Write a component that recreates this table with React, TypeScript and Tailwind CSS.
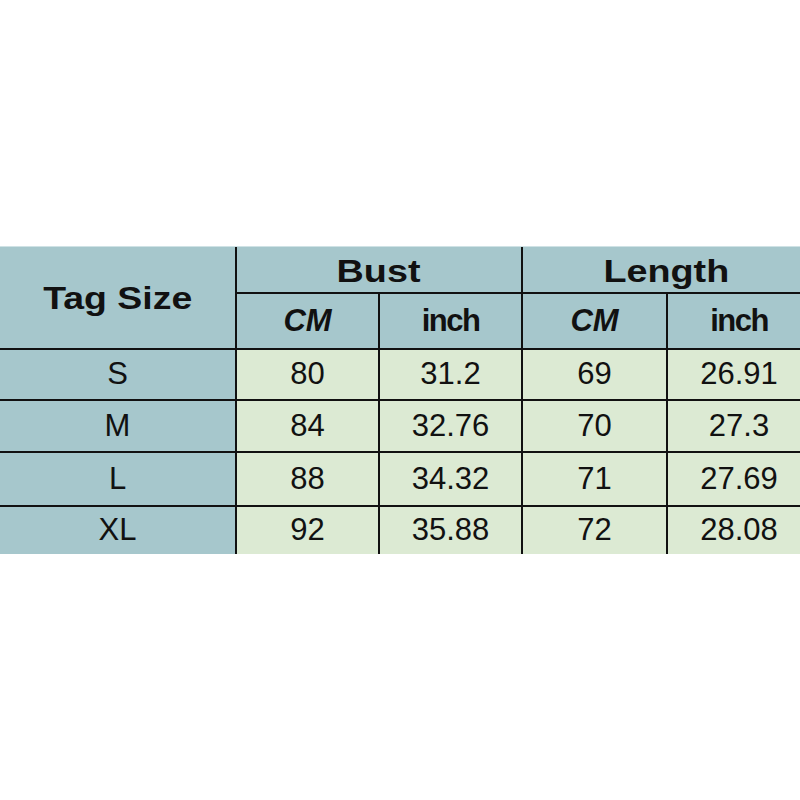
const blue = 'bg-[#a6c7cc]';
const green = 'bg-[#dcead3]';

const rows = [
    { tag: 'S', bustCm: '80', bustIn: '31.2', lenCm: '69', lenIn: '26.91' },
    { tag: 'M', bustCm: '84', bustIn: '32.76', lenCm: '70', lenIn: '27.3' },
    { tag: 'L', bustCm: '88', bustIn: '34.32', lenCm: '71', lenIn: '27.69' },
    { tag: 'XL', bustCm: '92', bustIn: '35.88', lenCm: '72', lenIn: '28.08' },
];

const rowHeights = ['h-[49px]', 'h-[50px]', 'h-[52px]', 'h-[47px]'];

export default function App() {
    return (
        <div className="w-[800px] h-[800px] bg-white overflow-hidden font-['Liberation_Sans',Arial,sans-serif] text-[#111]">
            <div className="h-[246px]" />
            <div className="w-[810px] border-t border-[#cfe2e5]">
                <div className="grid grid-cols-[235px_141px_141px_143px_142px] gap-[2px] bg-[#111]">
                    {/* header */}
                    <div className={`${blue} row-span-2 flex items-center justify-center text-[32px] font-bold`}>
                        <span className="inline-block scale-x-[1.17]">Tag Size</span>
                    </div>
                    <div className={`${blue} col-span-2 h-[45px] flex items-center justify-center text-[32px] font-bold pt-[2px]`}>
                        <span className="inline-block scale-x-[1.18]">Bust</span>
                    </div>
                    <div className={`${blue} col-span-2 h-[45px] flex items-center justify-center text-[32px] font-bold pt-[2px]`}>
                        <span className="inline-block scale-x-[1.18]">Length</span>
                    </div>
                    <div className={`${blue} h-[54px] flex items-center justify-center text-[31px] font-bold italic`}>CM</div>
                    <div className={`${blue} h-[54px] flex items-center justify-center text-[31px] font-bold tracking-[-1.5px]`}>inch</div>
                    <div className={`${blue} h-[54px] flex items-center justify-center text-[31px] font-bold italic`}>CM</div>
                    <div className={`${blue} h-[54px] flex items-center justify-center text-[31px] font-bold tracking-[-1.5px]`}>inch</div>

                    {rows.map((r, i) => (
                        <div key={r.tag} className="contents">
                            <div className={`${blue} ${rowHeights[i]} flex items-center justify-center text-[31px]`}>{r.tag}</div>
                            <div className={`${green} ${rowHeights[i]} flex items-center justify-center text-[31px]`}>{r.bustCm}</div>
                            <div className={`${green} ${rowHeights[i]} flex items-center justify-center text-[31px]`}>{r.bustIn}</div>
                            <div className={`${green} ${rowHeights[i]} flex items-center justify-center text-[31px]`}>{r.lenCm}</div>
                            <div className={`${green} ${rowHeights[i]} flex items-center justify-center text-[31px]`}>{r.lenIn}</div>
                        </div>
                    ))}
                </div>
            </div>
        </div>
    );
}
